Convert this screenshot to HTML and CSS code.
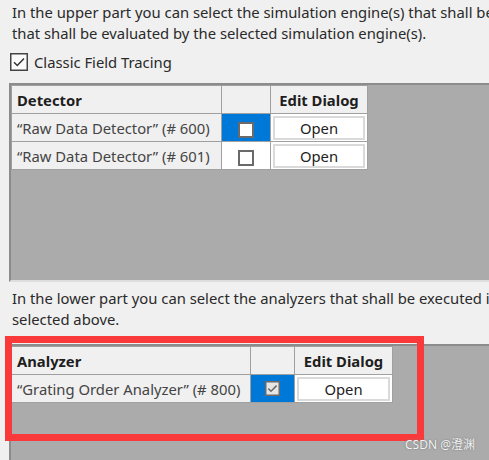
FILE: index.html
```html
<!DOCTYPE html>
<html>
<head>
<meta charset="utf-8">
<link rel="stylesheet" href="styles.css">
</head>
<body>
<div class="page">
  <p class="desc">In the upper part you can select the simulation engine(s) that shall be<br>that shall be evaluated by the selected simulation engine(s).</p>
  <div class="check-row">
    <svg class="cb" width="18" height="18" viewBox="0 0 18 18"><rect x="0.75" y="0.75" width="16.5" height="16.5" fill="#fbfbfb" stroke="#444" stroke-width="1.5"/><path d="M4 9.2 L7.3 12.5 L14 5.6" fill="none" stroke="#333" stroke-width="1.5"/></svg>
    <span>Classic Field Tracing</span>
  </div>
  <div class="grid upper">
    <table>
      <tr class="head">
        <th class="name">Detector</th>
        <th class="sel"></th>
        <th class="edit">Edit Dialog</th>
      </tr>
      <tr>
        <td class="name">“Raw Data Detector” (# 600)</td>
        <td class="sel active"><span class="box"></span></td>
        <td class="edit"><div class="btn">Open</div></td>
      </tr>
      <tr>
        <td class="name">“Raw Data Detector” (# 601)</td>
        <td class="sel"><span class="box"></span></td>
        <td class="edit"><div class="btn">Open</div></td>
      </tr>
    </table>
  </div>
  <p class="desc lower-desc">In the lower part you can select the analyzers that shall be executed in<br>selected above.</p>
  <div class="lower-wrap">
    <div class="grid lower">
      <table>
        <tr class="head">
          <th class="name">Analyzer</th>
          <th class="sel"></th>
          <th class="edit">Edit Dialog</th>
        </tr>
        <tr>
          <td class="name">“Grating Order Analyzer” (# 800)</td>
          <td class="sel active"><svg width="15" height="15" viewBox="0 0 15 15"><rect x="0.75" y="0.75" width="13.5" height="13.5" fill="#e6e6e6" stroke="#6a6a6a" stroke-width="1.5"/><path d="M3.3 7.6 L6 10.2 L11.6 4.6" fill="none" stroke="#6a6a6a" stroke-width="1.5"/></svg></td>
          <td class="edit"><div class="btn">Open</div></td>
        </tr>
      </table>
    </div>
    <div class="highlight"></div>
    <div class="watermark">CSDN @澄渊</div>
  </div>
</div>
</body>
</html>
```
FILE: styles.css
```css
html, body {
  margin: 0;
  padding: 0;
}
body {
  background: #f0f0f0;
  font-family: "Noto Sans", "Noto Sans CJK SC", sans-serif;
  font-size: 14.8px;
  color: #222;
  width: 489px;
  height: 460px;
  overflow: hidden;
}
.page {
  display: flex;
  flex-direction: column;
  height: 460px;
}
.desc {
  margin: 0;
  padding: 2px 0 0 12px;
  line-height: 21px;
  white-space: nowrap;
  overflow: hidden;
  color: #2a2a2a;
}
.check-row {
  display: flex;
  align-items: center;
  gap: 6px;
  height: 18px;
  margin-top: 9px;
  padding-left: 10px;
  color: #2a2a2a;
}
.cb { display: block; }
.grid {
  margin-left: 9px;
  background: #ababab;
  border-left: 2px solid #8c8c8c;
  border-top: 2px solid #8c8c8c;
}
.upper {
  margin-top: 12px;
  height: 195px;
  border-bottom: 2px solid #dedede;
}
table {
  border-collapse: collapse;
  line-height: 20px;
}
th, td {
  border: 1px solid #a0a0a0;
  padding: 0;
  white-space: nowrap;
  box-sizing: border-box;
}
th {
  height: 28px;
  background: #f0f0f0;
  font-weight: bold;
  color: #1e1e1e;
}
td { height: 28px; }
th.name, td.name {
  text-align: left;
  padding-left: 5px;
}
td.name {
  background: #f0f0f0;
  color: #444;
}
.upper th.name { width: 210px; }
.upper th.sel { width: 49px; }
.upper th.edit { width: 97px; }
.lower th.name { width: 239px; }
.lower th.sel { width: 44px; }
.lower th.edit { width: 98px; }
td.sel {
  background: #fff;
  text-align: center;
}
td.sel.active { background: #0078d7; }
td.sel svg { display: block; margin: 0 auto; }
.box {
  display: inline-block;
  width: 12px;
  height: 12px;
  background: #fff;
  border: 2px solid #6a6a6a;
  vertical-align: middle;
}
td.edit {
  background: #fff;
  padding: 1px 2px;
}
.btn {
  box-sizing: border-box;
  background: #fff;
  border: 2px solid #dadada;
  height: 24px;
  line-height: 20px;
  text-align: center;
  color: #222;
}
.lower-desc { padding-top: 6px; }
.lower-wrap {
  position: relative;
  flex: 1;
  margin-top: 14px;
  display: flex;
  flex-direction: column;
}
.lower {
  flex: 1;
}
.highlight {
  position: absolute;
  left: 5px;
  top: -8px;
  width: 405px;
  height: 91px;
  border: 7px solid #fa3a3a;
}
.watermark {
  position: absolute;
  right: 14px;
  bottom: 7px;
  font-size: 12px;
  color: #f4f4f4;
  text-shadow: 0 0 1px #777, 0 0 2px #888;
}
```
